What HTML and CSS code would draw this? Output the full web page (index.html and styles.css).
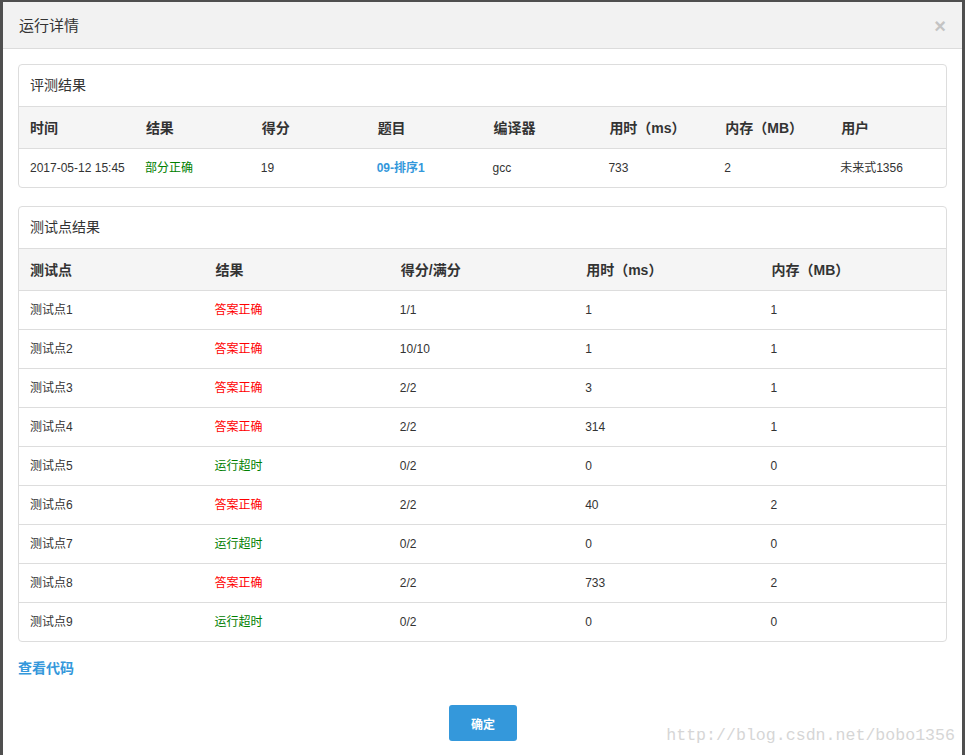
FILE: index.html
```html
<!DOCTYPE html>
<html lang="zh-CN">
<head>
<meta charset="utf-8">
<title>运行详情</title>
<link rel="stylesheet" href="styles.css">
</head>
<body>
<div class="modal">
  <div class="modal-header">
    <h4 class="modal-title">运行详情</h4>
    <span class="close">×</span>
  </div>
  <div class="modal-body">
    <div class="panel">
      <div class="panel-heading">评测结果</div>
      <table class="tbl">
        <thead>
          <tr><th>时间</th><th>结果</th><th>得分</th><th>题目</th><th>编译器</th><th>用时（ms）</th><th>内存（MB）</th><th>用户</th></tr>
        </thead>
        <tbody>
          <tr><td>2017-05-12 15:45</td><td class="ok-green">部分正确</td><td>19</td><td><span class="link">09-排序1</span></td><td>gcc</td><td>733</td><td>2</td><td>未来式1356</td></tr>
        </tbody>
      </table>
    </div>
    <div class="panel">
      <div class="panel-heading">测试点结果</div>
      <table class="tbl">
        <thead>
          <tr><th>测试点</th><th>结果</th><th>得分/满分</th><th>用时（ms）</th><th>内存（MB）</th></tr>
        </thead>
        <tbody>
          <tr><td>测试点1</td><td class="red">答案正确</td><td>1/1</td><td>1</td><td>1</td></tr>
          <tr><td>测试点2</td><td class="red">答案正确</td><td>10/10</td><td>1</td><td>1</td></tr>
          <tr><td>测试点3</td><td class="red">答案正确</td><td>2/2</td><td>3</td><td>1</td></tr>
          <tr><td>测试点4</td><td class="red">答案正确</td><td>2/2</td><td>314</td><td>1</td></tr>
          <tr><td>测试点5</td><td class="ok-green">运行超时</td><td>0/2</td><td>0</td><td>0</td></tr>
          <tr><td>测试点6</td><td class="red">答案正确</td><td>2/2</td><td>40</td><td>2</td></tr>
          <tr><td>测试点7</td><td class="ok-green">运行超时</td><td>0/2</td><td>0</td><td>0</td></tr>
          <tr><td>测试点8</td><td class="red">答案正确</td><td>2/2</td><td>733</td><td>2</td></tr>
          <tr><td>测试点9</td><td class="ok-green">运行超时</td><td>0/2</td><td>0</td><td>0</td></tr>
        </tbody>
      </table>
    </div>
    <div class="code-link">查看代码</div>
    <div class="footer">
      <button class="btn">确定</button>
    </div>
  </div>
</div>
<div class="watermark">http://blog.csdn.net/bobo1356</div>
</body>
</html>
```

FILE: styles.css
```css
html, body {
  margin: 0;
  padding: 0;
  height: 100%;
}
body {
  background: #4f4f4f;
  font-family: "Liberation Sans", "Noto Sans CJK SC", sans-serif;
  color: #333;
  overflow: hidden;
  line-height: 20px;
}
.modal {
  position: relative;
  margin: 2px 3px 0 3px;
  background: #fff;
  height: calc(100% - 2px);
  box-sizing: border-box;
}
.modal-header {
  position: relative;
  height: 46px;
  background: #f2f2f2;
  border-bottom: 1px solid #dcdcdc;
  display: flex;
  align-items: center;
  padding: 0 16px;
}
.modal-title {
  margin: 0;
  font-size: 15px;
  font-weight: normal;
  color: #333;
  line-height: 20px;
  padding-top: 1px;
}
.close {
  position: absolute;
  right: 16px;
  top: 12px;
  font-size: 20px;
  font-weight: bold;
  color: #c4c4c4;
  line-height: 24px;
}
.modal-body {
  padding: 15px 15px 0 15px;
}
.panel {
  border: 1px solid #dddddd;
  border-radius: 4px;
  margin-bottom: 18px;
  overflow: hidden;
}
.panel-heading {
  height: 41px;
  line-height: 41px;
  padding: 0 11px;
  font-size: 14px;
  border-bottom: 1px solid #dddddd;
}
.tbl {
  width: 100%;
  border-collapse: collapse;
  table-layout: fixed;
}
.tbl th {
  height: 41px;
  background: #f5f5f5;
  text-align: left;
  font-size: 14px;
  font-weight: bold;
  padding: 0 11px;
  border-bottom: 1px solid #dddddd;
  color: #333;
  line-height: 20px;
}
.tbl td {
  height: 38px;
  font-size: 12px;
  padding: 0 11px 0 10px;
  border-top: 1px solid #dddddd;
  color: #333;
  white-space: nowrap;
  line-height: 20px;
}
.tbl td:first-child {
  padding-left: 11px;
}
.tbl thead + tbody tr:first-child td {
  border-top: none;
}
.tbl td.ok-green {
  color: #008000;
}
.tbl td.red {
  color: #ff0000;
}
.link {
  color: #3498db;
  font-weight: bold;
}
.code-link {
  margin-top: -2px;
  color: #3498db;
  font-weight: bold;
  font-size: 14px;
  line-height: 20px;
}
.footer {
  display: flex;
  justify-content: center;
  padding-top: 27px;
  padding-left: 1px;
}
.btn {
  width: 68px;
  height: 36px;
  border: none;
  border-radius: 3px;
  background: #3498db;
  color: #fff;
  font-family: "Liberation Sans", "Noto Sans CJK SC", sans-serif;
  font-size: 12px;
  font-weight: bold;
  padding: 0;
}
.watermark {
  position: absolute;
  right: 10px;
  bottom: 9px;
  font-family: "Liberation Mono", monospace;
  font-size: 16.6px;
  color: #d6d6d6;
  line-height: 20px;
}
```
